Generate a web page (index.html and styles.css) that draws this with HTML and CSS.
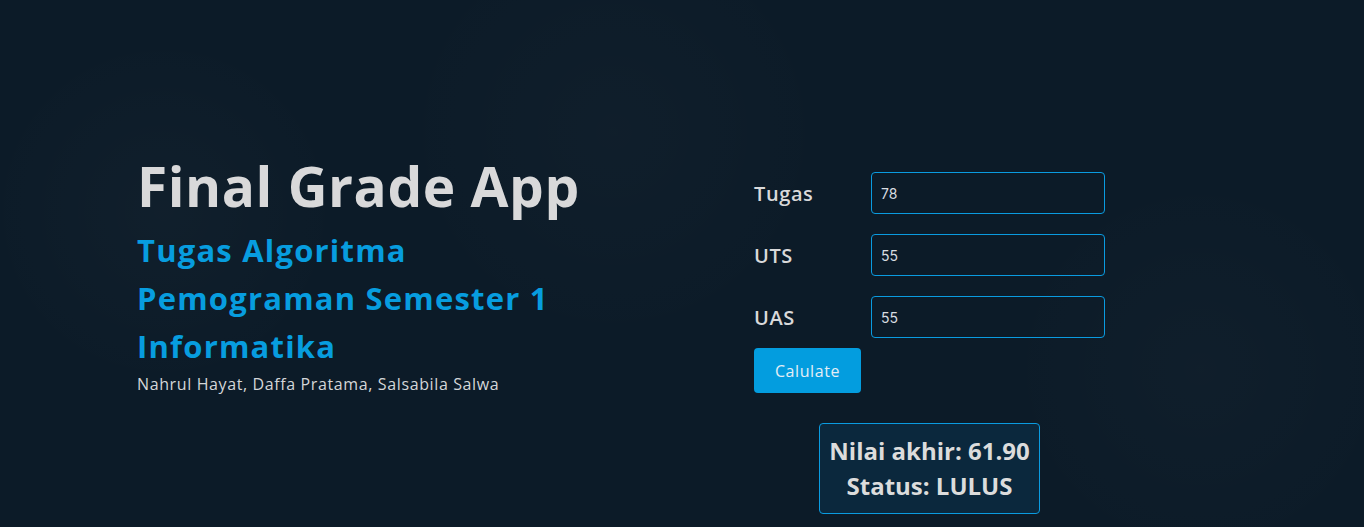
FILE: index.html
```html
<!DOCTYPE html>
<html lang="id">
<head>
<meta charset="utf-8">
<title>Final Grade App</title>
<link rel="stylesheet" href="styles.css">
</head>
<body>
<main class="page">
  <section class="intro">
    <h1 class="title">Final Grade App</h1>
    <h2 class="subtitle">Tugas Algoritma Pemograman Semester 1 Informatika</h2>
    <p class="authors">Nahrul Hayat, Daffa Pratama, Salsabila Salwa</p>
  </section>
  <section class="calc">
    <form class="form">
      <div class="row">
        <label class="label" for="tugas">Tugas</label>
        <input class="field" id="tugas" type="text" value="78">
      </div>
      <div class="row">
        <label class="label" for="uts">UTS</label>
        <input class="field" id="uts" type="text" value="55">
      </div>
      <div class="row">
        <label class="label" for="uas">UAS</label>
        <input class="field" id="uas" type="text" value="55">
      </div>
      <button class="btn" type="button">Calulate</button>
    </form>
    <div class="result">
      <p class="result-line">Nilai akhir: 61.90</p>
      <p class="result-line">Status: LULUS</p>
    </div>
  </section>
</main>
</body>
</html>
```

FILE: styles.css
```css
* { box-sizing: border-box; }

html, body {
  margin: 0;
  height: 100%;
}

body {
  background-color: #0c1b28;
  background-image:
    radial-gradient(circle at 12% 40%, rgba(255,255,255,0.018) 0, rgba(255,255,255,0) 180px),
    radial-gradient(circle at 45% 25%, rgba(255,255,255,0.015) 0, rgba(255,255,255,0) 220px),
    radial-gradient(circle at 88% 70%, rgba(255,255,255,0.015) 0, rgba(255,255,255,0) 200px);
  font-family: "Open Sans", "Noto Sans", sans-serif;
  color: #d9d9da;
}

.page {
  display: flex;
  padding: 150px 0 0 137px;
}

.intro {
  width: 617px;
}

.title {
  margin: 0;
  font-size: 55px;
  font-weight: 700;
  line-height: 72px;
  color: #d9d9da;
  letter-spacing: 0.55px;
}

.subtitle {
  margin: 4px 0 0;
  width: 460px;
  font-size: 31px;
  font-weight: 700;
  line-height: 48px;
  color: #079ddf;
  letter-spacing: 1.2px;
}

.authors {
  margin: 2px 0 0;
  font-size: 16px;
  line-height: 24px;
  color: #d4d6d8;
  letter-spacing: 0.62px;
}

.calc {
  display: flex;
  flex-direction: column;
  align-items: center;
  width: 351px;
  padding-top: 22px;
}

.form {
  display: flex;
  flex-direction: column;
  gap: 20px;
  width: 100%;
}

.row {
  display: flex;
  align-items: center;
}

.label {
  width: 117px;
  font-size: 20px;
  font-weight: 600;
  color: #d9d9da;
  letter-spacing: 0.6px;
  line-height: 26px;
  padding-top: 1px;
}

.field {
  width: 234px;
  height: 42px;
  padding: 0 9px;
  border: 1px solid #0a9be0;
  border-radius: 4px;
  background: transparent;
  color: #d9dde0;
  font-family: Inter, Roboto, sans-serif;
  font-size: 14px;
  outline: none;
}

.btn {
  align-self: flex-start;
  margin-top: -10px;
  width: 107px;
  height: 45px;
  border: 0;
  border-radius: 4px;
  background: #039ddf;
  color: #e3eef6;
  font-family: "Open Sans", "Noto Sans", sans-serif;
  font-size: 16px;
  letter-spacing: 0.6px;
  cursor: pointer;
}

.result {
  margin-top: 30px;
  width: 221px;
  padding: 9px 0 10px;
  border: 1px solid #0a9be0;
  border-radius: 4px;
  background: #0b283d;
  text-align: center;
}

.result-line {
  margin: 0;
  font-size: 24px;
  font-weight: 700;
  line-height: 35px;
  color: #dcdcdc;
  letter-spacing: 0;
}
```
